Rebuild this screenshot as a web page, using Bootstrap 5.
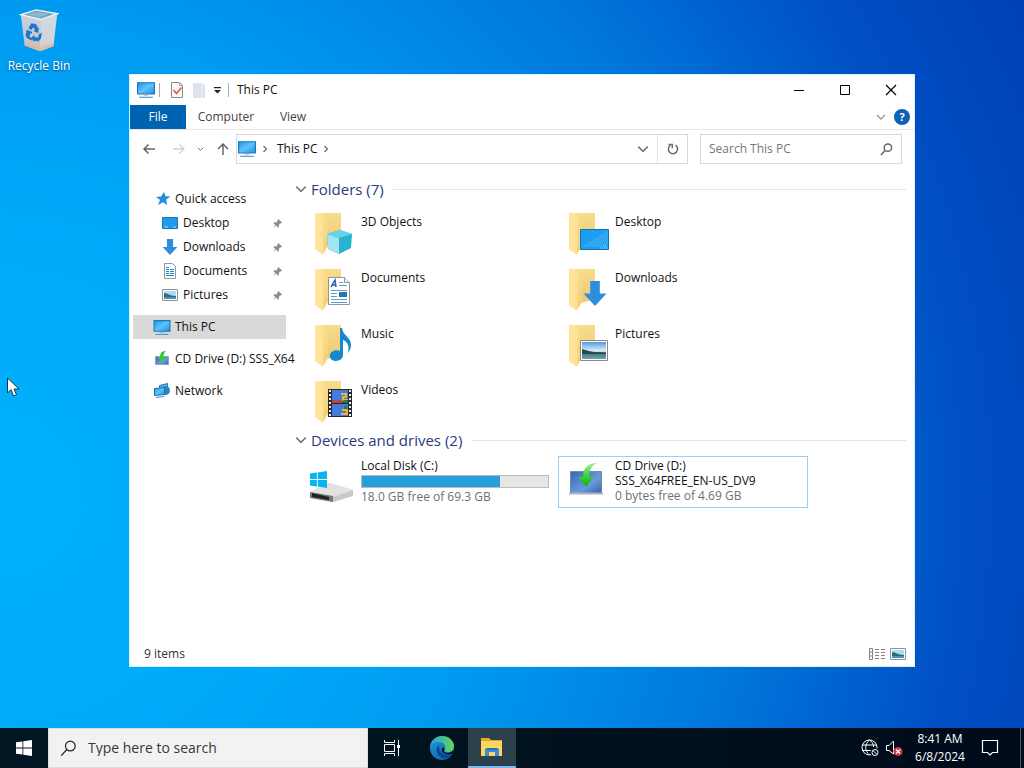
<!DOCTYPE html>
<html lang="en">
<head>
<meta charset="utf-8">
<meta name="viewport" content="width=device-width, initial-scale=1">
<title>This PC</title>
<link href="https://cdn.jsdelivr.net/npm/bootstrap@5.3.0/dist/css/bootstrap.min.css" rel="stylesheet">
<style>
body{font-family:"Open Sans","Noto Sans",sans-serif;font-size:12px;line-height:16px;color:#111;background:#0078dc}
button,input{font-family:inherit;font-size:inherit;line-height:inherit;color:inherit}
button{background:none;border:0;padding:0}
svg{display:block;flex-shrink:0}
a{color:inherit;text-decoration:none}
.desktop-area{background:radial-gradient(ellipse 112% 155% at 0 68%,#00b0fd 0,#00adfb 18%,#009cf1 42%,#0078dc 65%,#0050c4 84%,#003fb4 100%)}
.shortcut{width:78px;padding-top:8px;color:#fff;text-shadow:0 1px 2px #0008}
.pointer{left:6px;top:377px}
.explorer{left:129px;right:109px;top:74px;bottom:61px;background:#fff;border:1px solid #d6f3ff}
.title-row{height:30px;padding-left:7px}
.vline{width:1px;height:14px;background:#aaa}
.quick-tools{gap:4px;margin:0 6px 0 8px}
.caption-btn{width:46px;height:30px}
.ribbon{height:25px;border-bottom:1px solid #e6e6e6;color:#444}
.ribbon button{width:54px}
.ribbon .file-tab{width:56px;background:#0063b1;color:#fff}
.ribbon .wide-tab{width:80px}
.address-row{height:41px;padding:4px 12px 7px 12px}
.nav-tools{width:94px;padding-right:6px;color:#666}
.box{border:1px solid #d9d9d9;height:30px}
.refresh-btn{width:30px}
.search-box{width:202px;margin-left:12px}
.search-box input,.task-search input{border:0;outline:0;background:none;min-width:0}
input::placeholder{color:#767676;opacity:1}
.side{width:156px;padding-top:12px;padding-left:3px}
.side a{height:24px;padding-left:20px;gap:4px;white-space:nowrap}
.side a.sub{padding-left:28px}
.side .pin{margin-left:auto;margin-right:3px}
.side .picked{background:#d9d9d9}
.side .apart{margin-top:8px}
.content-pane{padding:6px 8px 0 9px}
.group-head{height:16px;font-size:15px;line-height:16px;color:#2b3a80;gap:4px;font-weight:400}
.group-head hr{color:#999;opacity:.25;margin:0 0 0 5px}
.tiles{display:grid;grid-template-columns:repeat(auto-fill,250px);gap:4px;padding-left:9px}
.folders{margin-top:15px}
.folders svg{margin-top:-2px}
.drives{margin-top:8px}
.tile{height:52px;border:1px solid transparent;padding:1px 4px 0 4px;gap:4px;line-height:15px}
.tile.focused{border-color:#99d1f5}
.usage{height:13px;margin:2px 0 1px;border-radius:0;border:1px solid #bcbcbc;background:#e6e6e6}
.usage .progress-bar{background:#26a0da}
.muted{color:#707070}
.status{height:24px;padding:0 8px 0 14px;color:#333}
.taskbar{height:40px;background:linear-gradient(90deg,#001723,#00131f 50%,#000a1a);color:#fff}
.task-btn{width:48px;height:40px}
.task-search{width:320px;background:#f2f2f2;border:1px solid #d9e0e3;padding-left:11px;gap:11px;font-size:14px}
.task-search input::placeholder{color:#383838}
.running{background:#2d414d;border-bottom:2px solid #76b9ed}
.tray{gap:5px}
.clock{width:64px;line-height:18px}
.peek{width:4px;border-left:1px solid #4b5967}
</style>
<script src="https://cdn.jsdelivr.net/npm/bootstrap@5.3.0/dist/js/bootstrap.bundle.min.js"></script>
</head>
<body class="vh-100 d-flex flex-column overflow-hidden">
<svg width="0" height="0" class="position-absolute" aria-hidden="true">
 <defs>
  <linearGradient id="blue" x2="1" y2="1"><stop stop-color="#1d94e5"/><stop offset=".5" stop-color="#5cc4fa"/><stop offset="1" stop-color="#1c8ee0"/></linearGradient>
  <linearGradient id="gold" x2="1" y2="1"><stop stop-color="#ffe9a6"/><stop offset="1" stop-color="#f3cd6c"/></linearGradient>
  <linearGradient id="goldback" x2="0" y2="1"><stop stop-color="#f8dc8e"/><stop offset="1" stop-color="#ecc871"/></linearGradient>
  <linearGradient id="sky" x2="0" y2="1"><stop stop-color="#4f9be0"/><stop offset=".55" stop-color="#e6f3fb"/><stop offset=".6" stop-color="#3b6d70"/><stop offset="1" stop-color="#6fa3bd"/></linearGradient>
  <linearGradient id="edgeb" x2="1" y2="1"><stop stop-color="#1b9de2"/><stop offset="1" stop-color="#0c59a4"/></linearGradient>
  <linearGradient id="edgeg" x2="1"><stop stop-color="#229fe0"/><stop offset="1" stop-color="#67d957"/></linearGradient>
  <linearGradient id="bin" x2="0" y2="1"><stop stop-color="#c3d3de"/><stop offset=".7" stop-color="#c7c9ce"/><stop offset="1" stop-color="#d9bca9"/></linearGradient>
  <linearGradient id="green" x2="0" y2="1"><stop stop-color="#a8efa0"/><stop offset=".5" stop-color="#3ad63c"/><stop offset="1" stop-color="#14a81c"/></linearGradient>
  <linearGradient id="screen" x2="1" y2="1"><stop stop-color="#3567b3"/><stop offset=".6" stop-color="#6b9bdc"/><stop offset="1" stop-color="#315fae"/></linearGradient>
 </defs>
 <symbol id="pc" viewBox="0 0 16 16"><path d="M.5 1.500h15v10H.5z" fill="url(#blue)" stroke="#1878ba"/><path d="M6 12h4v1H6z" fill="#9ab"/><path d="M2 14h12v1H2z" fill="#4d93c4"/></symbol>
 <symbol id="folder" viewBox="0 0 48 48"><path d="M10 1h22v30l-18 5z" fill="url(#goldback)"/><path d="M6 1h6l7 3v30l-5 8-8-5z" fill="url(#gold)"/><path d="M6 1l8 5v37l-8-6z" fill="#ffe39a"/></symbol>
 <symbol id="pinned" viewBox="0 0 12 12"><path d="M7 1l4 4-1 1-.8-.2L7.500 7.500 7.300 9.800l-.8.7L4.200 8.200 1 11l2.600-3.400L1.500 5.500l.8-.8 2.400-.2L6.300 2.800 6 2z" fill="#8a8f94"/></symbol>
 <symbol id="chevdown" viewBox="0 0 10 10"><path d="M1 3l4 4 4-4" fill="none" stroke="currentColor" stroke-width="1.300"/></symbol>
 <symbol id="chevright" viewBox="0 0 8 8"><path d="M2.500 1l3 3-3 3" fill="none" stroke="currentColor" stroke-width="1.400"/></symbol>
 <symbol id="downarrow" viewBox="0 0 24 26"><path d="M7 0h10v13h7L12 26 0 13h7z" fill="#2f8ddd"/></symbol>
 <symbol id="loupe" viewBox="0 0 14 14"><circle cx="8.500" cy="5" r="4" fill="none" stroke="currentColor"/><path d="M5.500 8L1 12.800" fill="none" stroke="currentColor"/></symbol>
 <symbol id="picture" viewBox="0 0 16 12"><path d="M.5.5h15v11H.5z" fill="#fff" stroke="#8d9499"/><path d="M2 2h12v8H2z" fill="#a9dcf6"/><path d="M2 4c4 0 5 3 12 3v3H2z" fill="#2d6d70"/><path d="M2 8h12v2H2z" fill="#5191b8"/></symbol>
 <symbol id="winlogo" viewBox="0 0 16 16"><path d="M0 2.300L6.500 1.400v6.200H0zM7.300 1.300L16 0v7.600H7.300zM0 8.400h6.500v6.200L0 13.700zM7.300 8.400H16V16l-8.700-1.300z" fill="currentColor"/></symbol>
</svg>

<main class="desktop-area flex-grow-1 position-relative overflow-hidden">
 <a href="#" class="shortcut d-flex flex-column align-items-center text-nowrap">
  <svg width="40" height="46" viewBox="0 0 40 48"><path d="M1 7L17 2l22 4-4 34-14 5-16-6z" fill="url(#bin)"/><path d="M1 7L17 2l22 4-17 6z" fill="#6f9ebc" stroke="#e9f4fa" stroke-width="1.500"/><path d="M7 7l11-3 13 2-10 4z" fill="#8db7cd"/><path d="M22 12l17-6-4 34-14 5z" fill="#dbe2e9" opacity=".5"/><path d="M5 36l16 5 15-5-1 4-14 5-16-6z" fill="#dcb79f" opacity=".7"/><g fill="#1976cd"><path d="M9 21l3-5 5 1 2 4 1-1-1 6-5-2 2-1-2-3-2 3z"/><path d="M8 23l5 2-1 2-1-1-1 4 3 2-1 2-5-3-1-3 1-3-1-1zM15 30l4 1 1-4 3-1-1 6-3 3-4-1v2l-3-5 3-3z"/></g></svg>
  <span class="mt-1">Recycle Bin</span>
 </a>

 <section class="explorer position-absolute d-flex flex-column" aria-label="This PC">
  <header class="title-row d-flex align-items-center">
   <svg width="18" height="18"><use href="#pc"/></svg>
   <span class="vline ms-1"></span>
   <div class="quick-tools d-flex align-items-center">
    <button aria-label="Properties"><svg width="18" height="18" viewBox="0 0 18 18"><path d="M3.500 1.500h8l3 3v12h-11z" fill="#fafafa" stroke="#8a8a8a"/><path d="M11.500 1.500v3h3" fill="none" stroke="#aaa"/><path d="M5.500 9l3 3.500 5-6" fill="none" stroke="#d9603b" stroke-width="1.600"/></svg></button>
    <button aria-label="New folder"><svg width="18" height="18" viewBox="0 0 18 18"><path d="M3 2h9l3 2v13H3z" fill="#dde3ec"/><path d="M12 2v15" stroke="#eef1f6"/></svg></button>
    <button aria-label="Customize toolbar"><svg width="10" height="10" viewBox="0 0 10 10"><path d="M2 2h7v1.300H2zM2 5h7L5.500 8.500z" fill="#222"/></svg></button>
   </div>
   <span class="vline"></span>
   <span class="ms-2 flex-grow-1">This PC</span>
   <button class="caption-btn d-flex align-items-center justify-content-center" aria-label="Minimize"><svg width="12" height="12"><path d="M1 6.500h10" stroke="#000"/></svg></button>
   <button class="caption-btn d-flex align-items-center justify-content-center" aria-label="Maximize"><svg width="12" height="12"><path d="M1.500 1.500h9v9h-9z" fill="none" stroke="#000"/></svg></button>
   <button class="caption-btn d-flex align-items-center justify-content-center" aria-label="Close"><svg width="12" height="12"><path d="M1 1l10 10M11 1L1 11" stroke="#000" stroke-width="1.200"/></svg></button>
  </header>
  <nav class="ribbon d-flex">
   <button class="file-tab">File</button>
   <button class="wide-tab">Computer</button>
   <button>View</button>
   <button class="ms-auto w-auto me-2" aria-label="Expand the ribbon"><svg width="10" height="10" style="color:#999"><use href="#chevdown"/></svg></button>
   <button class="w-auto me-1" aria-label="Help"><svg width="16" height="16"><circle cx="8" cy="8" r="8" fill="#0b62b8"/><text x="8" y="12" text-anchor="middle" fill="#fff" font-size="11" font-weight="700">?</text></svg></button>
  </nav>
  <div class="address-row d-flex">
   <div class="nav-tools d-flex align-items-center justify-content-between">
    <button aria-label="Back"><svg width="14" height="14" viewBox="0 0 14 14"><path d="M13 7H2M6.500 2.500L2 7l4.500 4.500" fill="none" stroke="#666" stroke-width="1.500"/></svg></button>
    <button class="ms-1" aria-label="Forward"><svg width="14" height="14" viewBox="0 0 14 14"><path d="M1 7h11M7.500 2.500L12 7l-4.500 4.500" fill="none" stroke="#d2d2d2" stroke-width="1.300"/></svg></button>
    <button aria-label="Recent locations"><svg width="7" height="8"><use href="#chevdown"/></svg></button>
    <button aria-label="Up"><svg width="14" height="14" viewBox="0 0 14 14"><path d="M7 13V2M2 7l5-5 5 5" fill="none" stroke="#666" stroke-width="1.500"/></svg></button>
   </div>
   <div class="box flex-grow-1 d-flex align-items-center">
    <svg width="20" height="18"><use href="#pc"/></svg>
    <svg class="ms-1 text-secondary" width="8" height="8"><use href="#chevright"/></svg>
    <button class="ms-2">This PC</button>
    <svg class="ms-1 text-secondary" width="8" height="8"><use href="#chevright"/></svg>
    <button class="ms-auto me-2 text-secondary" aria-label="Previous locations"><svg width="12" height="12"><use href="#chevdown"/></svg></button>
    <button class="refresh-btn h-100 border-start d-flex align-items-center justify-content-center" aria-label="Refresh"><svg width="14" height="14" viewBox="0 0 14 14"><path d="M9.500 3.200a4.600 4.600 0 1 1-5.300.2M2.500 2.500h3.800v3.800" fill="none" stroke="#6b6b6b" stroke-width="1.500"/></svg></button>
   </div>
   <label class="box search-box d-flex align-items-center ps-2 pe-2">
    <input class="flex-grow-1 p-0" type="text" placeholder="Search This PC" aria-label="Search This PC">
    <svg width="13" height="13" stroke-width="1.600" style="color:#666"><use href="#loupe"/></svg>
   </label>
  </div>
  <div class="d-flex flex-grow-1 overflow-hidden pt-1">
   <nav class="side flex-shrink-0">
    <a href="#" class="d-flex align-items-center"><svg width="18" height="14" viewBox="0 0 18 14"><path d="M11 0l1.500 4.200 5 .3-4.300 3 .8 5.500-4-2.800L5 13l2-5-4-3.100 5-.4z" fill="#238cdb"/></svg>Quick access</a>
    <a href="#" class="sub d-flex align-items-center"><svg width="18" height="16" viewBox="0 0 18 16"><path d="M1.500 2.500h15v11h-15z" fill="#2099ee" stroke="#1776bd"/><path d="M3 12h4M12 12h3" stroke="#9bd4f9"/></svg>Desktop<svg class="pin" width="11" height="11"><use href="#pinned"/></svg></a>
    <a href="#" class="sub d-flex align-items-center"><svg width="18" height="16"><use href="#downarrow"/></svg>Downloads<svg class="pin" width="11" height="11"><use href="#pinned"/></svg></a>
    <a href="#" class="sub d-flex align-items-center"><svg width="18" height="16" viewBox="0 0 18 16"><path d="M3.500.5h8l3 3v12h-11z" fill="#fff" stroke="#8999a5"/><path d="M5 4.500h3M5 6.500h3M5 8.500h3M5 10.500h3M5 12.500h8M9 6.500h4M9 8.500h4M9 10.500h4" stroke="#2f83bd"/></svg>Documents<svg class="pin" width="11" height="11"><use href="#pinned"/></svg></a>
    <a href="#" class="sub d-flex align-items-center"><svg width="18" height="12"><use href="#picture"/></svg>Pictures<svg class="pin" width="11" height="11"><use href="#pinned"/></svg></a>
    <a href="#" class="picked apart d-flex align-items-center"><svg width="18" height="17"><use href="#pc"/></svg>This PC</a>
    <a href="#" class="apart d-flex align-items-center"><svg width="18" height="16" viewBox="0 0 18 16"><path d="M2.500 5.500h13v8h-13z" fill="url(#screen)" stroke="#8fa2b7"/><path d="M13 0C9 0 7 2 7 6H4.500L9 11l4-5h-2.500c0-3 .5-4 2.500-6z" fill="#2fce38"/></svg>CD Drive (D:) SSS_X64</a>
    <a href="#" class="apart d-flex align-items-center"><svg width="18" height="16" viewBox="0 0 18 16"><path d="M6.500 2.500l8-2v9l-8 2z" fill="#58b4e8" stroke="#2577ad"/><circle cx="12.500" cy="7.500" r="4.500" fill="#2487cb"/><path d="M1.500 5.500l10-1v7l-10 1z" fill="url(#blue)" stroke="#246ea5"/><path d="M3 14.500l8-1" stroke="#4387b8"/></svg>Network</a>
   </nav>
   <div class="content-pane flex-grow-1">
    <h2 class="group-head d-flex align-items-center mb-0"><svg width="12" height="12" style="color:#777"><use href="#chevdown"/></svg>Folders (7)<hr class="flex-grow-1"></h2>
    <div class="tiles folders">
     <a href="#" class="tile d-flex"><svg width="48" height="48" viewBox="0 0 48 48"><use href="#folder"/><path d="M18 22l13-4 12 4-1 14-12 6-11-5z" fill="#28b4cf"/><path d="M18 22l13-4 12 4-13 4z" fill="#66d4e6"/><path d="M18 22l12 4v16l-11-5z" fill="#a0e5ef"/></svg><span>3D Objects</span></a>
     <a href="#" class="tile d-flex"><svg width="48" height="48" viewBox="0 0 48 48"><use href="#folder"/><path d="M17.500 17.500h28v20h-28z" fill="#1b9df0" stroke="#1673b3"/><path d="M18 35L45 18v17z" fill="#48b2f8" opacity=".5"/><path d="M37 36h7M40 34h4" stroke="#a5ddff" stroke-dasharray="1 1"/></svg><span>Desktop</span></a>
     <a href="#" class="tile d-flex"><svg width="48" height="48" viewBox="0 0 48 48"><use href="#folder"/><path d="M19.500 9.500h16l5 5v22h-21z" fill="#fff" stroke="#8b969d"/><path d="M35.500 9.500v5h5" fill="#eee" stroke="#8b969d"/><path d="M22 19l4-7 1 7M23 17h4" fill="none" stroke="#2461ae" stroke-width="1.500"/><path d="M30 14.500h4M30 17.500h8M22 22.500h16M22 25.500h6M22 28.500h6M22 31.500h16M22 34.500h16" stroke="#5a9ed1"/><path d="M30 24h8v5h-8z" fill="#2874ad"/></svg><span>Documents</span></a>
     <a href="#" class="tile d-flex"><svg width="48" height="48" viewBox="0 0 48 48"><use href="#folder"/><use href="#downarrow" x="20" y="13" width="24" height="25"/></svg><span>Downloads</span></a>
     <a href="#" class="tile d-flex"><svg width="48" height="48" viewBox="0 0 48 48"><use href="#folder"/><path d="M31 4h2c1 8 9 9 9 17 0 3-1 5-3 8 2-9-2-12-5-13v15c0 7-12 8-13 2-1-5 5-8 10-6z" fill="#1688cf"/></svg><span>Music</span></a>
     <a href="#" class="tile d-flex"><svg width="48" height="48" viewBox="0 0 48 48"><use href="#folder"/><path d="M17.500 16.500h27v20h-27z" fill="#fff" stroke="#888"/><path d="M19 18h24v17H19z" fill="url(#sky)"/><path d="M19 25l7 2 5 1 12 1v1H19z" fill="#244c4d"/></svg><span>Pictures</span></a>
     <a href="#" class="tile d-flex"><svg width="48" height="48" viewBox="0 0 48 48"><use href="#folder"/><path d="M19 9h24v28H19z" fill="#252a30"/><path d="M21 10v26M41 10v26" stroke="#eee" stroke-width="2" stroke-dasharray="2 2"/><path d="M23 10h16v12H23zM23 24h16v12H23z" fill="#457bdd"/><path d="M32 14h5v3h-3v3h5M32 34h6v-4h-5" fill="none" stroke="#edb42e" stroke-width="2"/><path d="M23 20l6 1 2 2h-8zM29 20h4v3h-4z" fill="#c74324"/><path d="M34 20h5v3h-5zM35 26h3v3h-3z" fill="#267c3a"/></svg><span>Videos</span></a>
    </div>
    <h2 class="group-head d-flex align-items-center mb-0"><svg width="12" height="12" style="color:#777"><use href="#chevdown"/></svg>Devices and drives (2)<hr class="flex-grow-1"></h2>
    <div class="tiles drives">
     <a href="#" class="tile d-flex"><svg width="48" height="48" viewBox="0 0 48 48"><path d="M1 34l19-9 24 7v6L24 44 1 39z" fill="#c9c9c9"/><path d="M1 34l19-9 24 7-20 7z" fill="#e2e2e2"/><path d="M1 34l23 4v6L1 40z" fill="#777"/><path d="M3 35l17 4v3L3 39z" fill="#222"/><use href="#winlogo" x="1" y="13" width="17" height="17" color="#08b5ec"/></svg>
      <span class="flex-grow-1">Local Disk (C:)<span class="progress usage" role="progressbar" aria-label="Space used" aria-valuenow="74" aria-valuemin="0" aria-valuemax="100"><span class="progress-bar" style="width:74%"></span></span><span class="muted d-block">18.0 GB free of 69.3 GB</span></span></a>
     <a href="#" class="tile focused d-flex"><svg width="48" height="48" viewBox="0 0 48 48"><path d="M7.500 13.500h31v22h-31z" fill="url(#screen)" stroke="#758aa8"/><path d="M6 35.500h34" stroke="#a8b5c8" stroke-width="2"/><path d="M34 5C25 5 20 10 20 19h-5l8 10 8-10h-5c0-8 3-11 8-14z" fill="url(#green)"/></svg><span>CD Drive (D:)<br>SSS_X64FREE_EN-US_DV9<br><span class="muted">0 bytes free of 4.69 GB</span></span></a>
    </div>
   </div>
  </div>
  <footer class="status d-flex align-items-center">
   <span class="me-auto">9 items</span>
   <button class="me-1" aria-label="Details view"><svg width="18" height="14" viewBox="0 0 18 14"><path d="M1.500 1.500h3v11h-3zM1 5h4M1 9h4M7 2.500h4M7 5.500h4M7 8.500h4M7 11.500h4M13 2.500h4M13 5.500h4M13 8.500h4M13 11.500h4" fill="none" stroke="#838383"/></svg></button>
   <button aria-label="Large icons view"><svg width="16" height="12"><use href="#picture"/></svg></button>
  </footer>
 </section>

 <svg class="pointer position-absolute" width="14" height="21" viewBox="0 0 14 21"><path d="M1.500 1v15l3.500-3.500 2.500 6.500 3-1.200L8 12h5z" fill="#fff" stroke="#16364f"/></svg>
</main>

<footer class="taskbar d-flex flex-shrink-0 align-items-stretch">
 <button class="task-btn d-flex align-items-center justify-content-center" aria-label="Start"><svg width="16" height="16"><use href="#winlogo"/></svg></button>
 <label class="task-search d-flex align-items-center"><svg width="17" height="17" style="color:#222"><use href="#loupe"/></svg><input class="flex-grow-1 p-0" type="text" placeholder="Type here to search" aria-label="Type here to search"></label>
 <button class="task-btn d-flex align-items-center justify-content-center" aria-label="Task view"><svg width="18" height="18" viewBox="0 0 18 18"><path d="M1.500 1v2.500h10V1M1.500 17v-2.500h10V17M1.500 5.500h10v7h-10zM15.500 1v16" fill="none" stroke="#fff"/><path d="M14 6h3v3h-3z" fill="#fff"/></svg></button>
 <button class="task-btn d-flex align-items-center justify-content-center ps-1 me-1" aria-label="Microsoft Edge"><svg width="24" height="24" viewBox="0 0 24 24"><circle cx="12" cy="12" r="12" fill="url(#edgeb)"/><path d="M0 11C1 4 6 0 12 0c7 0 12 5 12 10 0 4-3 6-6 6-4 0-4-2-3-4 1-3-2-6-6-6-4 0-8 2-9 5z" fill="url(#edgeg)"/><path d="M9 9c-4 3-3 10 3 13 4 1 8-1 10-4-4 2-9 1-11-2-2-2-2-5-2-7z" fill="#0b4a8e"/><path d="M15 12c-2 3-1 5 3 5 2 0 4-1 6-3-1 2-1 3-2 4-4 1-9 0-10-3-1-2 1-4 3-3z" fill="#00131f"/></svg></button>
 <button class="task-btn running d-flex align-items-center justify-content-center" aria-label="File Explorer"><svg width="24" height="20" viewBox="0 0 24 20"><path d="M1 1h8l2 2h11v15H1z" fill="#e8a91e"/><path d="M1 4h21v15H1z" fill="#ffd461"/><path d="M5 19v-7l2-1h10l2 1v7h-4v-4H9v4z" fill="#3590cf"/><path d="M7 11h10v2H7z" fill="#2371ae"/></svg></button>
 <div class="tray d-flex align-items-center ms-auto">
  <button aria-label="Network, no internet"><svg width="19" height="18" viewBox="0 0 19 18"><g fill="none" stroke="#fff"><circle cx="8.500" cy="8.500" r="7.500"/><path d="M1 6h15M1 11.500h9M8.500 1c-5 4-5 11 0 15M8.500 1c3 2 4 4 4 7"/></g><circle cx="14" cy="13.500" r="4.500" fill="#000c1a"/><circle cx="14" cy="13.500" r="3" fill="none" stroke="#fff"/><path d="M12 11.500l4 4" stroke="#fff"/></svg></button>
  <button aria-label="Volume, no device"><svg width="18" height="16" viewBox="0 0 18 16"><path d="M1.500 5.500H4L8.500 1v13L4 10.500H1.500z" fill="none" stroke="#fff"/><circle cx="13" cy="11.500" r="4.500" fill="#d9303e"/><path d="M11 9.500l4 4M15 9.500l-4 4" stroke="#fff" stroke-width="1.300"/></svg></button>
  <button class="clock text-center">8:41 AM<br>6/8/2024</button>
  <button class="ms-1 me-2" aria-label="Notifications"><svg width="18" height="18" viewBox="0 0 18 18"><path d="M1.500 1.500h15v12h-5L9 16l-2.500-2.500h-5z" fill="none" stroke="#fff" stroke-width="1.200"/></svg></button>
  <button class="peek h-100 ms-2" aria-label="Show desktop"></button>
 </div>
</footer>
</body>
</html>
